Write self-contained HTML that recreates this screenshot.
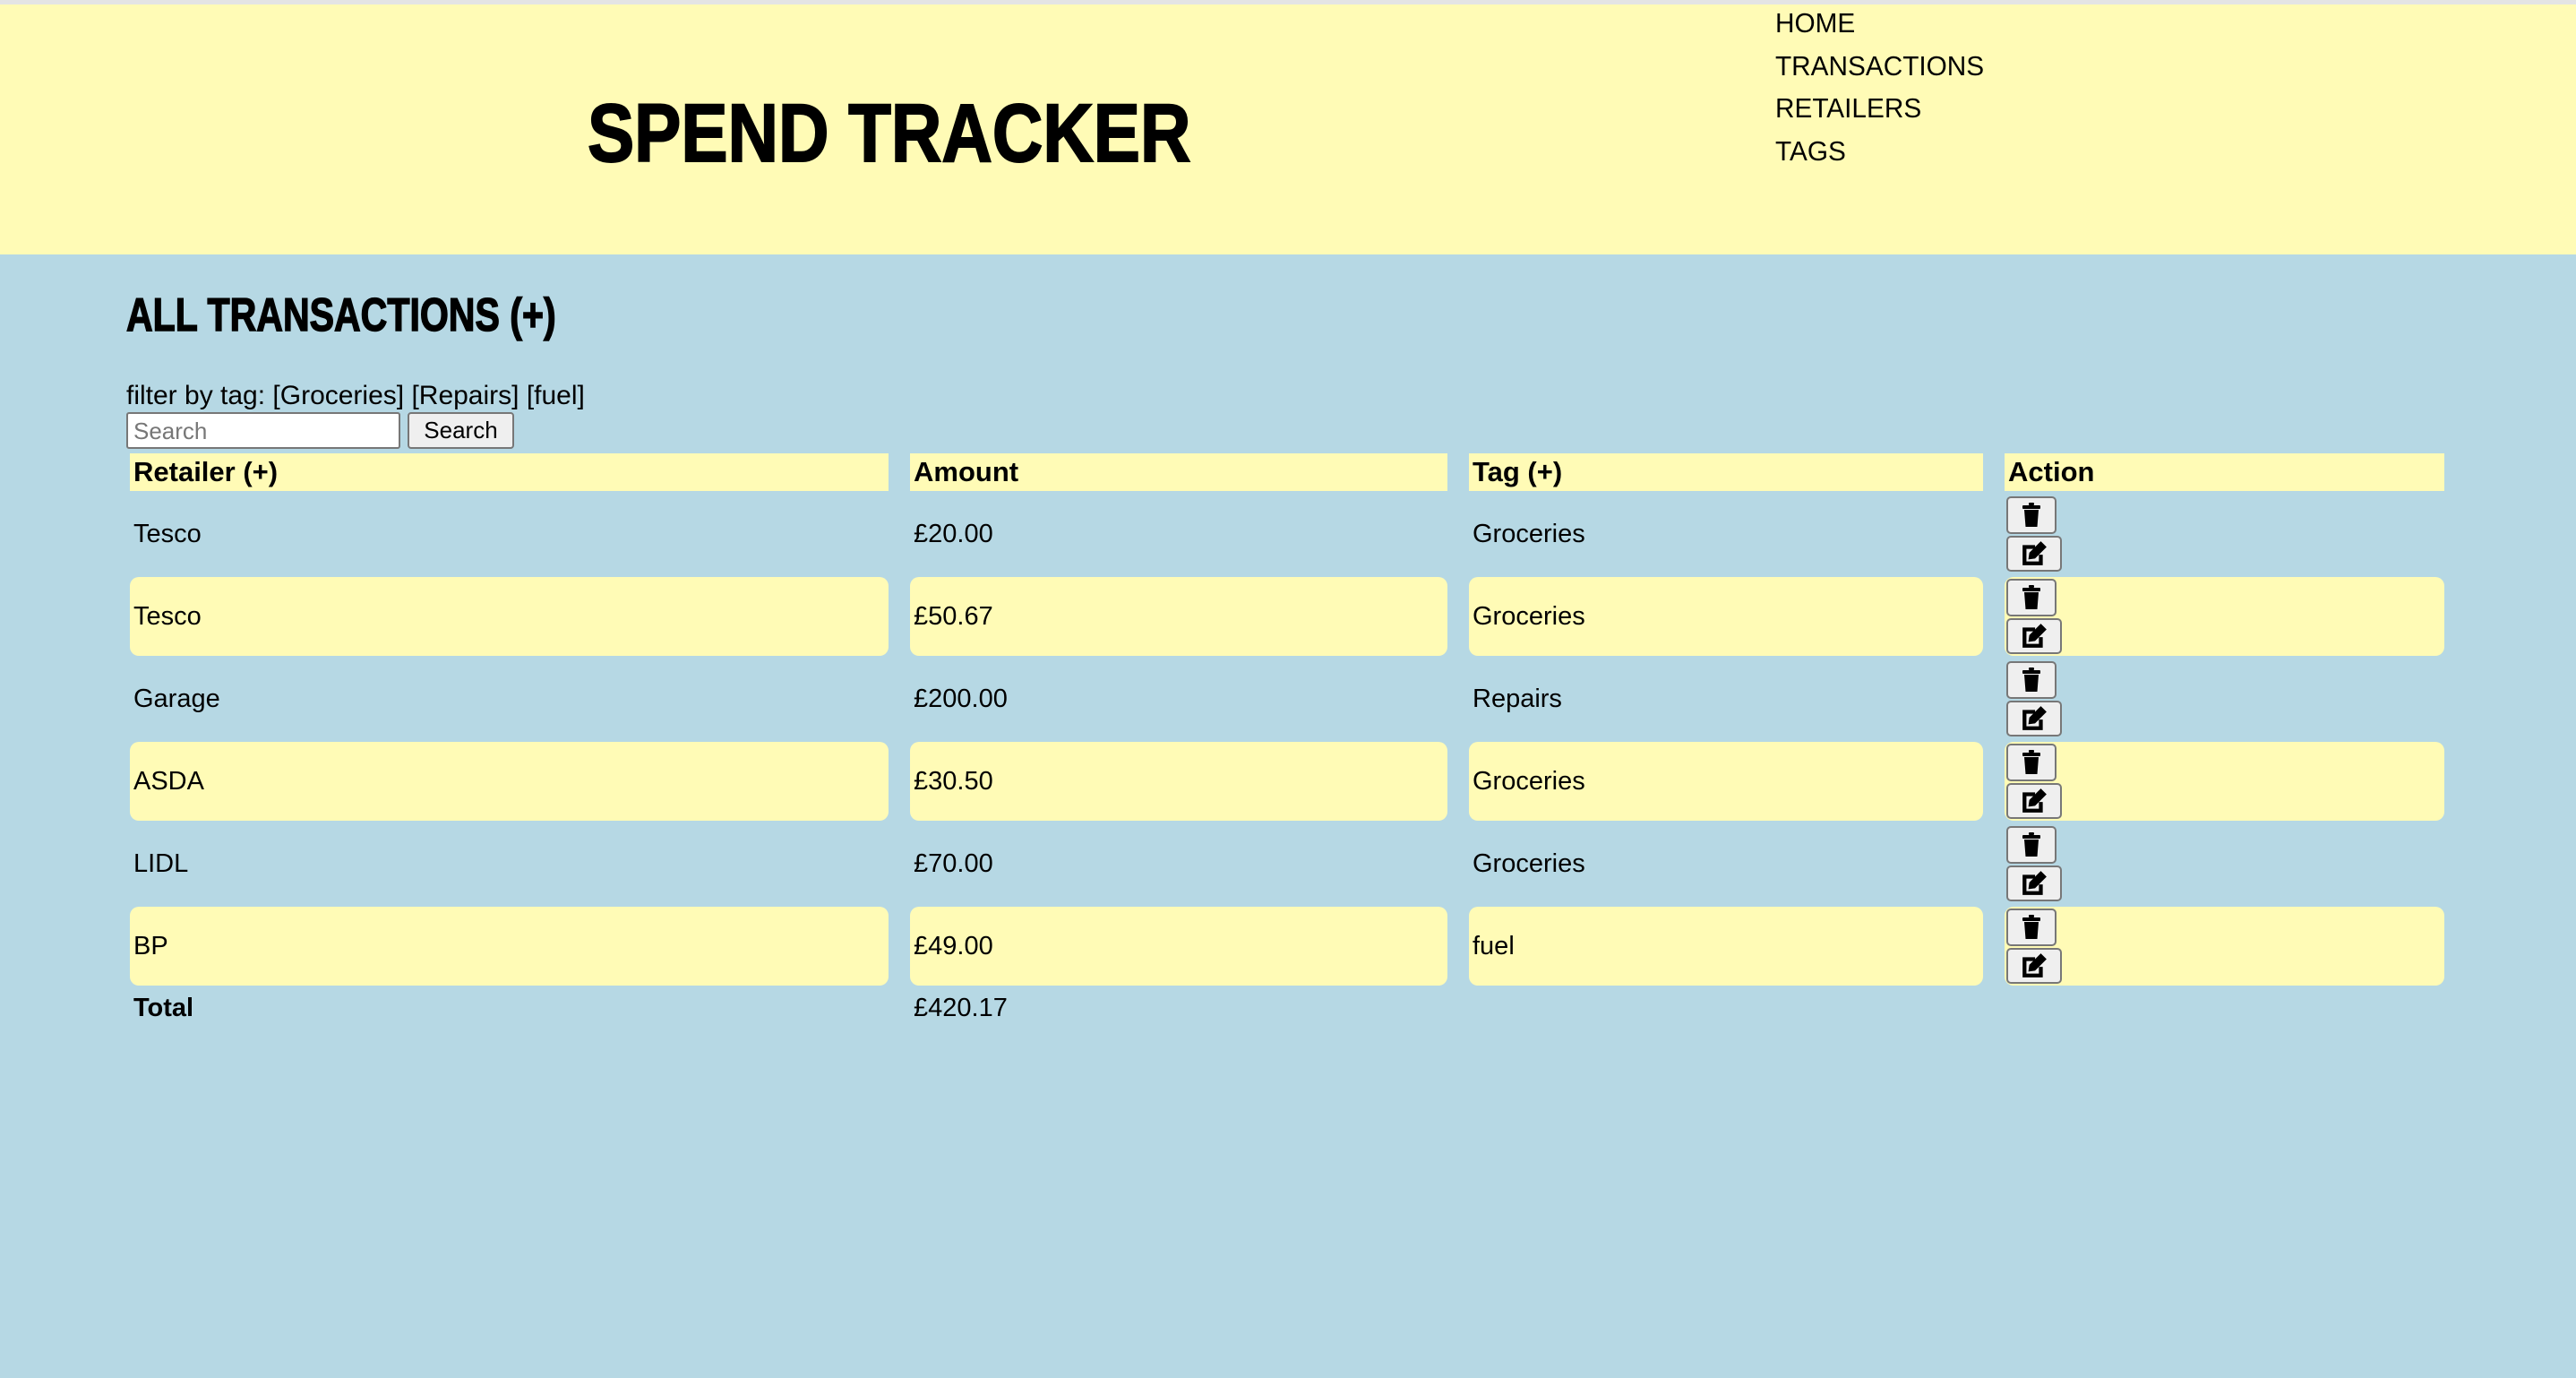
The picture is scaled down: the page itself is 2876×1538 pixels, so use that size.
<!DOCTYPE html>
<html><head><meta charset="utf-8"><style>
*{margin:0;padding:0;box-sizing:border-box}
body{width:2876px;height:1538px;background:#b6d8e4;font-family:"Liberation Sans",sans-serif;color:#000;position:relative;overflow:hidden}
.topline{position:absolute;left:0;top:0;width:2876px;height:5px;background:#e4e4e4}
header{position:absolute;left:0;top:5px;width:2876px;height:279px;background:#fffbb6}
.title{position:absolute;left:656px;top:98px;font-size:92px;font-weight:900;line-height:92px;white-space:nowrap;transform:scaleX(0.85);transform-origin:left top;-webkit-text-stroke:2px #000}
nav{position:absolute;left:1982px;top:1px}
nav div{font-size:31px;height:47.7px;line-height:40px;white-space:nowrap;transform:scaleX(0.96);transform-origin:left}
h2{position:absolute;left:141px;top:326px;font-size:52px;line-height:52px;font-weight:900;white-space:nowrap;transform:scaleX(0.79);transform-origin:left top;-webkit-text-stroke:1.5px #000}
.filter{position:absolute;left:141px;top:425px;font-size:30px;line-height:34px;white-space:nowrap;transform:scaleX(1.0);transform-origin:left}
.inp{position:absolute;left:141px;top:460px;width:306px;height:41px;background:#fff;border:2px solid #777;border-radius:3px;font-size:26px;color:#777;padding:4px 6px;line-height:30px}
.btn{position:absolute;left:455px;top:460px;width:119px;height:41px;background:#efefef;border:2px solid #777;border-radius:4px;font-size:26px;text-align:center;line-height:36px}
table{position:absolute;left:121px;top:502px;border-collapse:separate;border-spacing:24px 4px;font-size:29px}
td,th{padding:0 4px;text-align:left;vertical-align:middle;white-space:nowrap}
th{height:42px;background:#fffbb6;font-size:31px;font-weight:bold}
td{height:88px}
tr.y td{background:#fffbb6;border-radius:10px}
.ab{display:block;width:56px;height:42px;background:#efefef;border:2px solid #777;border-radius:5px;margin:2px 0 2px -2px;display:flex;align-items:center;justify-content:center}
.ab.e{width:62px;height:40px}
tr.t td{height:42px}
</style></head><body>
<div class="topline"></div>
<header>
<div class="title">SPEND TRACKER</div>
<nav><div>HOME</div><div>TRANSACTIONS</div><div>RETAILERS</div><div>TAGS</div></nav>
</header>
<h2>ALL TRANSACTIONS (+)</h2>
<div class="filter">filter by tag: [Groceries] [Repairs] [fuel]</div>
<div class="inp">Search</div>
<div class="btn">Search</div>
<table>
<colgroup><col style="width:847px"><col style="width:600px"><col style="width:574px"><col style="width:491px"></colgroup>
<tr><th>Retailer (+)</th><th>Amount</th><th>Tag (+)</th><th>Action</th></tr>
<tr><td>Tesco</td><td>£20.00</td><td>Groceries</td><td>ACT</td></tr>
<tr class="y"><td>Tesco</td><td>£50.67</td><td>Groceries</td><td>ACT</td></tr>
<tr><td>Garage</td><td>£200.00</td><td>Repairs</td><td>ACT</td></tr>
<tr class="y"><td>ASDA</td><td>£30.50</td><td>Groceries</td><td>ACT</td></tr>
<tr><td>LIDL</td><td>£70.00</td><td>Groceries</td><td>ACT</td></tr>
<tr class="y"><td>BP</td><td>£49.00</td><td>fuel</td><td>ACT</td></tr>
<tr class="t"><td><b>Total</b></td><td>£420.17</td><td></td><td></td></tr>
</table>
<script>
var a='<span class="ab"><svg width="22" height="28" viewBox="0 0 22 28"><rect x="8" y="0" width="6" height="3" rx="1"/><rect x="1" y="3" width="20" height="4" rx="1"/><path d="M3 8h16l-1.5 19h-13z"/></svg></span><span class="ab e"><svg width="30" height="30" viewBox="0 0 28 28"><path d="M2 5h13v4H6v13h13v-7h4v11H2z"/><path d="M21 1l6 6-12 12-7 1 1-7z"/></svg></span>';
document.querySelectorAll('td').forEach(function(t){if(t.textContent==='ACT')t.innerHTML=a;});
</script>
</body></html>
